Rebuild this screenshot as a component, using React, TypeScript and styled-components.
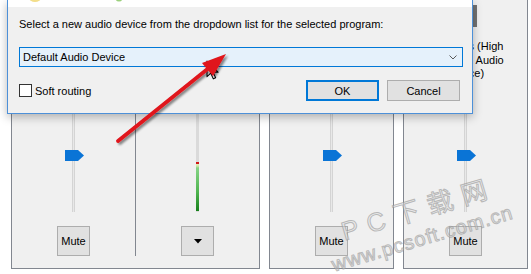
import React from "react";
import styled, { createGlobalStyle } from "styled-components";

const GlobalStyle = createGlobalStyle`
  html, body { margin: 0; padding: 0; background: #ffffff; }
  body {
    width: 531px; height: 274px; overflow: hidden;
    font-family: "Liberation Sans", Arial, sans-serif;
    font-size: 11px; color: #000;
  }
  #root { width: 531px; height: 274px; overflow: hidden; }
`;

const Stage = styled.div`
  position: relative;
  width: 531px;
  height: 274px;
  overflow: hidden;
  background: #ffffff;
`;

/* ---------- mixer behind the dialog ---------- */

const Mixer = styled.div`
  display: flex;
  align-items: flex-start;
  gap: 9px;
  padding-left: 11px;
  margin-top: -10px;
`;

const Panel = styled.div`
  display: flex;
  height: 279px;
  box-sizing: border-box;
  border: 1px solid #828790;
  background: #f0f0f0;
`;

const Column = styled.div`
  width: 123px;
  height: 100%;
  box-sizing: border-box;
  display: flex;
  flex-direction: column;
  align-items: center;
  padding: 14px 0 12px;
`;

const Divider = styled.div`
  width: 1px;
  align-self: stretch;
  background: #828790;
  margin-bottom: 12px;
`;

const DeviceIcon = styled.svg`
  display: block;
  flex: none;
`;

const Label = styled.div`
  margin-top: 13px;
  height: 40.5px;
  line-height: 13.5px;
  text-align: center;
  white-space: nowrap;
  flex: none;
`;

const SliderArea = styled.div`
  position: relative;
  flex: 1;
  width: 21px;
  display: flex;
  justify-content: center;
`;

const Track = styled.div`
  width: 3px;
  height: 100%;
  box-sizing: border-box;
  background: #e8e8e8;
  border-left: 1px solid #d4d4d4;
  border-right: 1px solid #d4d4d4;
`;

const Thumb = styled.svg<{ $bottom: number }>`
  position: absolute;
  left: 2px;
  bottom: ${(p) => p.$bottom}px;
`;

const MeterTrack = styled.div`
  position: relative;
  width: 3px;
  height: 100%;
  background: #dadada;
`;

const MeterFill = styled.div<{ $height: number }>`
  position: absolute;
  left: 0;
  right: 0;
  bottom: 1px;
  height: ${(p) => p.$height}px;
  background: linear-gradient(
    to bottom,
    #d01818 0px,
    #d01818 2px,
    #e4efb8 2px,
    #cfe8a8 4px,
    #86d486 6px,
    #4fb44f 30px,
    #17801c 100%
  );
`;

const MixButton = styled.button`
  flex: none;
  width: 33px;
  height: 30px;
  margin-top: 14px;
  padding: 0;
  box-sizing: border-box;
  background: #e1e1e1;
  border: 1px solid #adadad;
  font-family: "Liberation Sans", Arial, sans-serif;
  font-size: 11px;
  color: #000;
  display: flex;
  align-items: center;
  justify-content: center;
`;

/* ---------- the dialog ---------- */

const Dialog = styled.div`
  position: absolute;
  left: 7px;
  top: 0;
  width: 466px;
  height: 114px;
  box-sizing: border-box;
  border: 1px solid #4d90d8;
  border-top: none;
  background: #f0f0f0;
  box-shadow: 0 3px 9px rgba(0, 0, 0, 0.28);
  display: flex;
  flex-direction: column;
`;

const TitleStrip = styled.div`
  position: relative;
  height: 7px;
  background: #ffffff;
  flex: none;
  overflow: hidden;
`;

const TitleBits = styled.svg`
  position: absolute;
  left: 0;
  top: 0;
`;

const DialogBody = styled.div`
  flex: 1;
  display: flex;
  flex-direction: column;
  padding: 10px 9px 0 11px;
`;

const Prompt = styled.div`
  line-height: 15px;
  white-space: nowrap;
`;

const Combo = styled.div`
  margin-top: 15px;
  height: 20px;
  box-sizing: border-box;
  border: 1px solid #0078d7;
  background: #e5f1fb;
  display: flex;
  align-items: center;
  justify-content: space-between;
  padding: 0 5px 0 3px;
`;

const Footer = styled.div`
  margin-top: 13px;
  height: 21px;
  display: flex;
  align-items: center;
`;

const CheckBox = styled.span`
  width: 13px;
  height: 13px;
  box-sizing: border-box;
  border: 1px solid #333333;
  background: #ffffff;
  flex: none;
`;

const CheckLabel = styled.span`
  margin-left: 3px;
`;

const ButtonGroup = styled.div`
  margin-left: auto;
  margin-right: 3px;
  display: flex;
  gap: 8px;
`;

const DialogButton = styled.button<{ $primary?: boolean }>`
  width: 73px;
  height: 21px;
  padding: 0;
  box-sizing: border-box;
  background: #e1e1e1;
  border: ${(p) => (p.$primary ? "2px solid #0078d7" : "1px solid #adadad")};
  font-family: "Liberation Sans", Arial, sans-serif;
  font-size: 11px;
  color: #000;
`;

/* ---------- overlays ---------- */

const Overlay = styled.svg`
  position: absolute;
  left: 0;
  top: 0;
  pointer-events: none;
`;

const Watermark = styled.div<{ $size: number; $spacing: number }>`
  position: absolute;
  white-space: nowrap;
  transform-origin: 0 50%;
  transform: rotate(-16.5deg);
  font-family: "Liberation Sans", "Noto Sans CJK SC", sans-serif;
  font-size: ${(p) => p.$size}px;
  letter-spacing: ${(p) => p.$spacing}px;
  line-height: 28px;
  color: rgba(225, 225, 225, 0.55);
  -webkit-text-stroke: 1px rgba(140, 140, 140, 0.55);
  pointer-events: none;
`;

/* ---------- data ---------- */

type ColumnData = {
  label: string[];
  kind: "slider" | "meter";
  button: "mute" | "menu";
};

const panels: ColumnData[][] = [
  [
    { label: ["System Sounds", "", ""], kind: "slider", button: "mute" },
    { label: ["Default Audio", "Device", ""], kind: "meter", button: "menu" },
  ],
  [{ label: ["Audio Router", "", ""], kind: "slider", button: "mute" }],
  [
    {
      label: ["Speakers (High", "Definition Audio", "Device)"],
      kind: "slider",
      button: "mute",
    },
  ],
];

const Icon = () => (
  <DeviceIcon width="31" height="22" viewBox="0 0 31 22">
    <rect x="4" y="0" width="23" height="22" fill="#737373" />
    <rect x="7" y="3" width="16" height="16" fill="#a8a8a8" />
  </DeviceIcon>
);

const MixColumn = ({ data }: { data: ColumnData }) => (
  <Column>
    <Icon />
    <Label>
      {data.label.map((l, i) => (
        <div key={i}>{l || "\u00a0"}</div>
      ))}
    </Label>
    <SliderArea>
      {data.kind === "slider" ? (
        <>
          <Track />
          <Thumb $bottom={51} width="19" height="11" viewBox="0 0 19 11">
            <path d="M0 0 H13 L19 5.5 L13 11 H0 Z" fill="#0a74d6" />
          </Thumb>
        </>
      ) : (
        <MeterTrack>
          <MeterFill $height={49} />
        </MeterTrack>
      )}
    </SliderArea>
    <MixButton>
      {data.button === "mute" ? (
        "Mute"
      ) : (
        <svg width="8" height="5" viewBox="0 0 8 5">
          <path d="M0 0 H8 L4 4.5 Z" fill="#000" />
        </svg>
      )}
    </MixButton>
  </Column>
);

export default function App() {
  return (
    <Stage>
      <GlobalStyle />
      <Mixer>
        {panels.map((cols, pi) => (
          <Panel key={pi}>
            {cols.map((c, ci) => (
              <React.Fragment key={ci}>
                {ci > 0 && <Divider />}
                <MixColumn data={c} />
              </React.Fragment>
            ))}
          </Panel>
        ))}
      </Mixer>

      <Dialog>
        <TitleStrip>
          <TitleBits width="466" height="7" viewBox="0 0 466 7">
            <ellipse cx="27" cy="-2" rx="6" ry="4" fill="#f3de8a" />
            <ellipse cx="111" cy="-2" rx="3.5" ry="3.5" fill="#9bd07c" />
          </TitleBits>
        </TitleStrip>
        <DialogBody>
          <Prompt>
            Select a new audio device from the dropdown list for the selected
            program:
          </Prompt>
          <Combo>
            <span>Default Audio Device</span>
            <svg width="8" height="5" viewBox="0 0 8 5">
              <polyline
                points="0.5,0.5 4,4 7.5,0.5"
                fill="none"
                stroke="#5a5a5a"
                strokeWidth="1"
              />
            </svg>
          </Combo>
          <Footer>
            <CheckBox />
            <CheckLabel>Soft routing</CheckLabel>
            <ButtonGroup>
              <DialogButton $primary>OK</DialogButton>
              <DialogButton>Cancel</DialogButton>
            </ButtonGroup>
          </Footer>
        </DialogBody>
      </Dialog>

      <Overlay width="531" height="274" viewBox="0 0 531 274">
        <defs>
          <filter id="arrowShadow" x="-20%" y="-20%" width="140%" height="140%">
            <feDropShadow dx="2" dy="2" stdDeviation="1.3" floodColor="#000" floodOpacity="0.45" />
          </filter>
        </defs>
        <path
          transform="translate(207 61) scale(1.05)"
          d="M0 0 L0 15 L3.5 11.5 L6 17 L8.2 16 L5.8 10.6 L10.5 10.6 Z"
          fill="#ffffff"
          stroke="#000000"
          strokeWidth="1"
          strokeLinejoin="round"
        />
        <g filter="url(#arrowShadow)">
          <line
            x1="118"
            y1="141"
            x2="210"
            y2="67"
            stroke="#e0141b"
            strokeWidth="3.8"
            strokeLinecap="round"
          />
          <path d="M226 54 L202 63 L213 76 Z" fill="#e0141b" />
        </g>
      </Overlay>

      <Watermark $size={26} $spacing={1} style={{ left: 342, top: 218 }}>
        P C 下 载 网
      </Watermark>
      <Watermark $size={20} $spacing={1} style={{ left: 332, top: 251 }}>
        www.pcsoft.com.cn
      </Watermark>
    </Stage>
  );
}
